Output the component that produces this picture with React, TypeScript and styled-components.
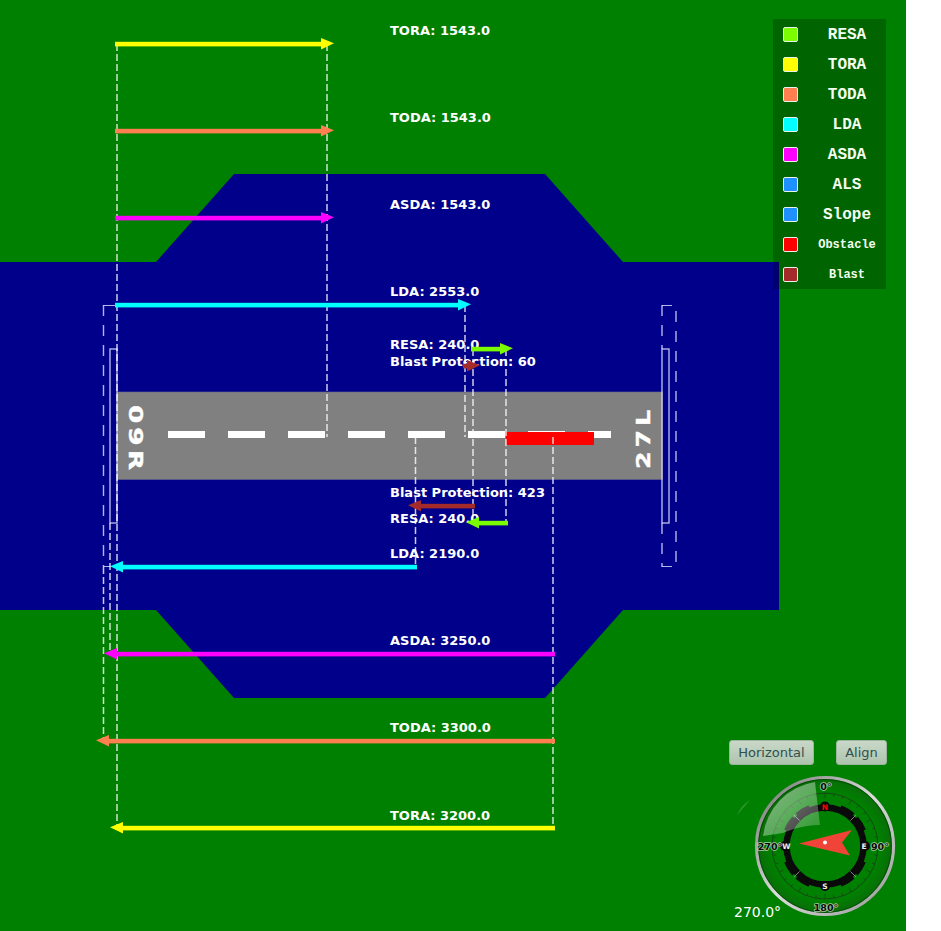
import styled, { createGlobalStyle } from 'styled-components'

const GlobalStyle = createGlobalStyle`
  html, body {
    margin: 0;
    background: #ffffff;
    font-family: "DejaVu Sans", sans-serif;
  }
`

const Stage = styled.div`
  position: relative;
  width: 906px;
  height: 931px;
  overflow: hidden;
  background: #008000;
`

const Drawing = styled.svg`
  display: block;
  width: 906px;
  height: 931px;
`

const DistanceLabel = styled.text`
  font-family: "DejaVu Sans", sans-serif;
  font-size: 13px;
  font-weight: 700;
  fill: #ffffff;
`

const RunwayName = styled.text`
  font-family: "DejaVu Sans", sans-serif;
  font-size: 19.5px;
  font-weight: 700;
  letter-spacing: 3px;
  fill: #ffffff;
  stroke: #ffffff;
  stroke-width: 0.4px;
  text-anchor: middle;
`

const Legend = styled.div`
  position: absolute;
  top: 19px;
  left: 773px;
  display: flex;
  flex-direction: column;
  width: 113px;
  height: 270px;
  background: rgba(0, 0, 0, 0.22);
`

const LegendRow = styled.div`
  display: grid;
  grid-template-columns: 15px 1fr;
  align-items: center;
  height: 30px;
  padding-left: 10px;
`

const Swatch = styled.span<{ $color: string }>`
  box-sizing: border-box;
  width: 15px;
  height: 15px;
  border: 1px solid #e8f4e8;
  border-radius: 2px;
  background: ${(p) => p.$color};
`

const LegendName = styled.span<{ $small?: boolean }>`
  position: relative;
  top: 1px;
  padding-left: 10px;
  font-family: "Liberation Mono", monospace;
  font-size: ${(p) => (p.$small ? '12px' : '16px')};
  font-weight: 700;
  color: #f4fff0;
  text-align: center;
`

const Controls = styled.div`
  position: absolute;
  top: 740px;
  left: 729px;
  display: flex;
  gap: 22px;
  width: 158px;
`

const Button = styled.button`
  box-sizing: border-box;
  height: 25px;
  padding: 0 8px 1px;
  border: 1px solid #9db59d;
  border-radius: 3px;
  background: linear-gradient(#c9d8c9, #aec4ae);
  font-family: "DejaVu Sans", sans-serif;
  font-size: 13px;
  color: #2f4f4f;
`

const HorizontalButton = styled(Button)`
  width: 85px;
`

const AlignButton = styled(Button)`
  width: 51px;
`

const CompassBox = styled.svg`
  position: absolute;
  top: 760px;
  left: 730px;
  width: 176px;
  height: 171px;
`

const DegreeLabel = styled.text`
  font-family: "DejaVu Sans", sans-serif;
  font-size: 9.5px;
  font-weight: 700;
  fill: #0a0a0a;
  text-anchor: middle;
  paint-order: stroke;
  stroke: rgba(255, 255, 255, 0.65);
  stroke-width: 1.6px;
`

const CardinalLabel = styled.text<{ $color: string }>`
  font-family: "DejaVu Sans", sans-serif;
  font-size: 7.5px;
  font-weight: 700;
  fill: ${(p) => p.$color};
  text-anchor: middle;
`

const Heading = styled.div`
  position: absolute;
  top: 904px;
  left: 734px;
  font-size: 14px;
  color: #ffffff;
`

const WHITE_LINE = 'rgba(255, 255, 255, 0.8)'
const BOX_LINE = 'rgba(225, 225, 255, 0.8)'

const legendItems = [
  { name: 'RESA', color: '#7cfc00' },
  { name: 'TORA', color: '#ffff00' },
  { name: 'TODA', color: '#ff7f50' },
  { name: 'LDA', color: '#00ffff' },
  { name: 'ASDA', color: '#ff00ff' },
  { name: 'ALS', color: '#1e90ff' },
  { name: 'Slope', color: '#1e90ff' },
  { name: 'Obstacle', color: '#ff0000', small: true },
  { name: 'Blast', color: '#a52a2a', small: true },
]

// from = tail of the arrow, to = tip, y = centre of the shaft
const arrows = [
  { from: 115, to: 334, y: 44, color: '#ffff00' },
  { from: 115, to: 334, y: 131, color: '#ff7f50' },
  { from: 115, to: 334, y: 218, color: '#ff00ff' },
  { from: 115, to: 471, y: 305, color: '#00ffff' },
  { from: 471, to: 513, y: 349, color: '#7cfc00' },
  { from: 463, to: 480, y: 366, color: '#a52a2a' },
  { from: 475, to: 408, y: 506, color: '#a52a2a' },
  { from: 508, to: 466, y: 523, color: '#7cfc00' },
  { from: 417, to: 110, y: 567, color: '#00ffff' },
  { from: 555, to: 104, y: 654, color: '#ff00ff' },
  { from: 555, to: 96, y: 741, color: '#ff7f50' },
  { from: 555, to: 110, y: 828, color: '#ffff00' },
]

const labels = [
  { text: 'TORA: 1543.0', y: 35 },
  { text: 'TODA: 1543.0', y: 122 },
  { text: 'ASDA: 1543.0', y: 209 },
  { text: 'LDA: 2553.0', y: 296 },
  { text: 'RESA: 240.0', y: 349 },
  { text: 'Blast Protection: 60', y: 366 },
  { text: 'Blast Protection: 423', y: 497 },
  { text: 'RESA: 240.0', y: 523 },
  { text: 'LDA: 2190.0', y: 558 },
  { text: 'ASDA: 3250.0', y: 645 },
  { text: 'TODA: 3300.0', y: 732 },
  { text: 'TORA: 3200.0', y: 820 },
]

const guides = [
  { x: 117, y1: 44, y2: 828 },
  { x: 327, y1: 44, y2: 437 },
  { x: 465, y1: 305, y2: 437 },
  { x: 473, y1: 349, y2: 523 },
  { x: 506, y1: 349, y2: 523 },
  { x: 415.5, y1: 437, y2: 567 },
  { x: 553, y1: 437, y2: 828 },
  { x: 103.5, y1: 567, y2: 741 },
  { x: 110, y1: 523, y2: 654 },
]

// the long-dash outline of the blast area round each runway end
const boxEdges = [
  { x: 103.5, y1: 305, y2: 567 },
  { x: 662, y1: 305, y2: 349 },
  { x: 662, y1: 523, y2: 567 },
  { x: 676, y1: 311, y2: 567 },
]

const dashes = [168, 228, 288, 348, 408, 468, 528]

const Arrow = ({ from, to, y, color }: { from: number; to: number; y: number; color: string }) => {
  const dir = to > from ? 1 : -1
  const neck = to - dir * 13
  return (
    <g fill={color}>
      <rect x={Math.min(from, neck)} y={y - 2.2} width={Math.abs(neck - from)} height={4.6} />
      <polygon points={`${neck},${y - 6} ${to},${y - 0.8} ${neck},${y + 5.5}`} />
    </g>
  )
}

const polar = (r: number, deg: number, cx = 95, cy = 86) => {
  const a = ((deg - 90) * Math.PI) / 180
  return { x: cx + r * Math.cos(a), y: cy + r * Math.sin(a) }
}

const arc = (r: number, a: number, b: number) => {
  const s = polar(r, a)
  const e = polar(r, b)
  return `M${s.x},${s.y} A${r},${r} 0 0 1 ${e.x},${e.y}`
}

const Compass = () => {
  const ticks = Array.from({ length: 36 }, (_, i) => i * 10)
  return (
    <CompassBox viewBox="0 0 176 171">
      <defs>
        <linearGradient id="rim" x1="0" y1="0" x2="1" y2="1">
          <stop offset="0" stopColor="#6e6e6e" />
          <stop offset="0.5" stopColor="#dcdcdc" />
          <stop offset="1" stopColor="#949494" />
        </linearGradient>
        <radialGradient id="face" cx="0.5" cy="0.5" r="0.5">
          <stop offset="0.8" stopColor="#008000" />
          <stop offset="1" stopColor="#0a6a0a" />
        </radialGradient>
        <linearGradient id="glass" x1="0" y1="0" x2="1" y2="1">
          <stop offset="0" stopColor="#ffffff" stopOpacity="0.55" />
          <stop offset="1" stopColor="#ffffff" stopOpacity="0.18" />
        </linearGradient>
      </defs>
      <circle cx={95} cy={86} r={68.5} fill="url(#face)" stroke="url(#rim)" strokeWidth={3.2} />
      <circle cx={95} cy={86} r={66.4} fill="none" stroke="rgba(0, 50, 0, 0.55)" strokeWidth={1} />
      <circle cx={95} cy={86} r={53} fill="none" stroke="#1c3a1c" strokeWidth={0.8} />
      {ticks.map((deg) => {
        const a = polar(53, deg)
        const b = polar(deg % 30 === 0 ? 48 : 50, deg)
        return <line key={deg} x1={a.x} y1={a.y} x2={b.x} y2={b.y} stroke="#1c3a1c" strokeWidth={0.7} />
      })}
      <circle cx={95} cy={86} r={38.5} fill="#008000" stroke="#0a0a0a" strokeWidth={6.5} />
      {[0, 90, 180, 270].map((q) => (
        <g key={q}>
          <path d={arc(40.5, q + 22, q + 42)} fill="none" stroke="#0a0a0a" strokeWidth={7} />
          <path d={arc(40.5, q + 48, q + 68)} fill="none" stroke="#0a0a0a" strokeWidth={7} />
        </g>
      ))}
      {[45, 135, 225, 315].map((deg) => {
        const a = polar(36, deg)
        const b = polar(44, deg)
        return <line key={deg} x1={a.x} y1={a.y} x2={b.x} y2={b.y} stroke="#a0a0a0" strokeWidth={0.8} />
      })}
      <circle cx={95} cy={46.5} r={5} fill="#0a0a0a" />
      <circle cx={135} cy={86} r={5} fill="#0a0a0a" />
      <circle cx={95} cy={126} r={5} fill="#0a0a0a" />
      <circle cx={55} cy={86} r={5} fill="#0a0a0a" />
      <path d="M33,76 A62,62 0 0 1 85,22 L90,65 C72,65 58,71 53,73 Z" fill="url(#glass)" />
      <path d="M7,55 C10,48 15,43 20,40 C15,46 11,50 7,55 Z" fill="#ffffff" fillOpacity={0.18} />
      <CardinalLabel $color="#ff0000" x={95} y={49.5}>N</CardinalLabel>
      <CardinalLabel $color="#f0f0f0" x={134} y={89}>E</CardinalLabel>
      <CardinalLabel $color="#f0f0f0" x={95} y={129}>S</CardinalLabel>
      <CardinalLabel $color="#f0f0f0" x={56.5} y={89}>W</CardinalLabel>
      <DegreeLabel x={96} y={30}>0°</DegreeLabel>
      <DegreeLabel x={150} y={89.5}>90°</DegreeLabel>
      <DegreeLabel x={96} y={151}>180°</DegreeLabel>
      <DegreeLabel x={40} y={89.5}>270°</DegreeLabel>
      <polygon points="69,83.5 122,70 112,82.5 120,95.5" fill="#f04438" />
      <circle cx={95} cy={82.5} r={2} fill="#ffffff" />
    </CompassBox>
  )
}

const App = () => {
  return (
    <Stage>
      <GlobalStyle />
      <Drawing viewBox="0 0 906 931">
        <rect x={0} y={262} width={779} height={348} fill="#00008b" />
        <polygon points="156,262 234,174 545,174 623,262" fill="#00008b" />
        <polygon points="156,610 234,698 545,698 623,610" fill="#00008b" />
        <rect x={117} y={392} width={545.5} height={87.5} fill="#808080" />
        <rect x={117} y={392} width={545.5} height={87.5} fill="none" stroke="#6a6a8a" strokeWidth={0.6} />
        {dashes.map((x) => (
          <rect key={x} x={x} y={431} width={37} height={7} fill="#ffffff" />
        ))}
        <rect x={588} y={431} width={23} height={7} fill="#ffffff" />
        <rect x={506} y={432} width={88} height={13} fill="#ff0000" />
        <RunwayName transform="translate(129 439.5) rotate(90) scale(1.35 1)">09R</RunwayName>
        <RunwayName transform="translate(650 437.5) rotate(-90) scale(1.3 1)">27L</RunwayName>
        {labels.map((l) => (
          <DistanceLabel key={l.y} x={390} y={l.y}>{l.text}</DistanceLabel>
        ))}
        <rect x={110} y={349} width={7} height={174} fill="none" stroke={BOX_LINE} strokeWidth={1.4} />
        <rect x={662} y={349} width={7} height={174} fill="none" stroke={BOX_LINE} strokeWidth={1.4} />
        <path d="M103.5,305.5 H115 M103.5,566.5 H115 M662,305.5 H672 M662,566.5 H672" stroke={BOX_LINE} strokeWidth={1.2} fill="none" />
        {boxEdges.map((g) => (
          <line
            key={`${g.x}-${g.y1}`}
            x1={g.x}
            y1={g.y1}
            x2={g.x}
            y2={g.y2}
            stroke={BOX_LINE}
            strokeWidth={1.4}
            strokeDasharray="11 9"
          />
        ))}
        {guides.map((g) => (
          <line
            key={`${g.x}-${g.y1}`}
            x1={g.x}
            y1={g.y1}
            x2={g.x}
            y2={g.y2}
            stroke={WHITE_LINE}
            strokeWidth={1.5}
            strokeDasharray="7 3"
          />
        ))}
        {arrows.map((a) => (
          <Arrow key={`${a.y}`} {...a} />
        ))}
      </Drawing>
      <Legend>
        {legendItems.map((item) => (
          <LegendRow key={item.name}>
            <Swatch $color={item.color} />
            <LegendName $small={item.small}>{item.name}</LegendName>
          </LegendRow>
        ))}
      </Legend>
      <Controls>
        <HorizontalButton>Horizontal</HorizontalButton>
        <AlignButton>Align</AlignButton>
      </Controls>
      <Compass />
      <Heading>270.0°</Heading>
    </Stage>
  )
}

export default App
